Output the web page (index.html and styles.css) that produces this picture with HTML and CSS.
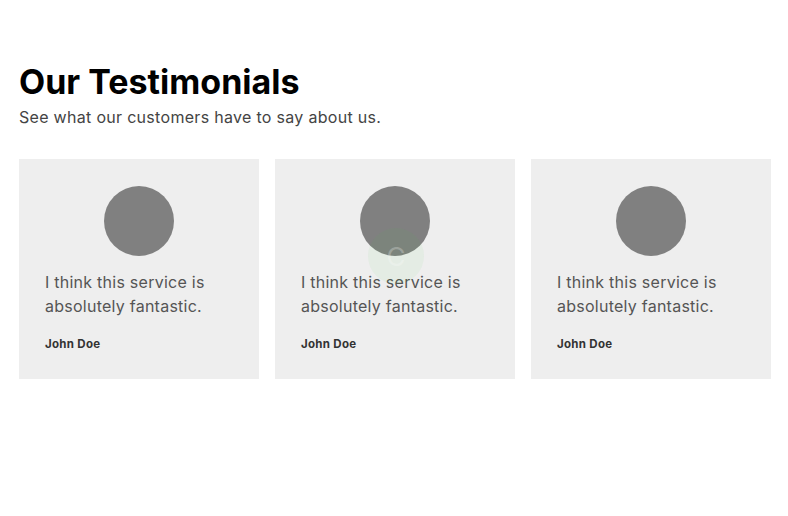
FILE: index.html
```html
<!DOCTYPE html>
<html lang="en">
<head>
<meta charset="utf-8">
<title>Our Testimonials</title>
<link rel="stylesheet" href="styles.css">
</head>
<body>
<section class="testimonials">
  <h1 class="title">Our Testimonials</h1>
  <p class="subtitle">See what our customers have to say about us.</p>
  <div class="cards">
    <div class="card">
      <div class="avatar"></div>
      <p class="quote">I think this service is absolutely fantastic.</p>
      <p class="name">John Doe</p>
    </div>
    <div class="card">
      <div class="avatar"></div>
      <p class="quote">I think this service is absolutely fantastic.</p>
      <p class="name">John Doe</p>
    </div>
    <div class="card">
      <div class="avatar"></div>
      <p class="quote">I think this service is absolutely fantastic.</p>
      <p class="name">John Doe</p>
    </div>
  </div>
</section>
<div class="watermark"><span class="watermark-glyph">C</span></div>
</body>
</html>
```
FILE: styles.css
```css
* { box-sizing: border-box; }
html, body { margin: 0; padding: 0; background: #fff; }
body {
  font-family: Inter, "Open Sans", sans-serif;
  color: #000;
  position: relative;
  width: 788px;
  height: 516px;
  overflow: hidden;
}
.testimonials {
  padding: 60px 17px 0 19px;
}
.title {
  margin: 0;
  font-size: 34px;
  line-height: 44px;
  font-weight: 700;
  color: #000;
}
.subtitle {
  margin: 1px 0 0;
  font-size: 16px;
  line-height: 24px;
  letter-spacing: 0.3px;
  color: #444;
}
.cards {
  margin-top: 30px;
  display: grid;
  grid-template-columns: repeat(3, 240px);
  gap: 16px;
}
.card {
  background: #eeeeee;
  height: 220px;
  padding: 27px 26px 0;
  display: flex;
  flex-direction: column;
}
.avatar {
  width: 70px;
  height: 70px;
  border-radius: 50%;
  background: #808080;
  align-self: center;
}
.quote {
  margin: 14px 0 0;
  font-size: 16px;
  line-height: 24px;
  letter-spacing: 0.25px;
  color: #555;
}
.name {
  margin: 18px 0 0;
  font-size: 11.5px;
  line-height: 16px;
  letter-spacing: 0.3px;
  font-weight: 700;
  color: #333;
}
.watermark {
  position: absolute;
  left: 368px;
  top: 228px;
  width: 56px;
  height: 56px;
  border-radius: 50%;
  background: rgba(60, 200, 60, 0.06);
  display: flex;
  align-items: center;
  justify-content: center;
}
.watermark-glyph {
  font-size: 26px;
  color: rgba(255, 255, 255, 0.25);
}
```
